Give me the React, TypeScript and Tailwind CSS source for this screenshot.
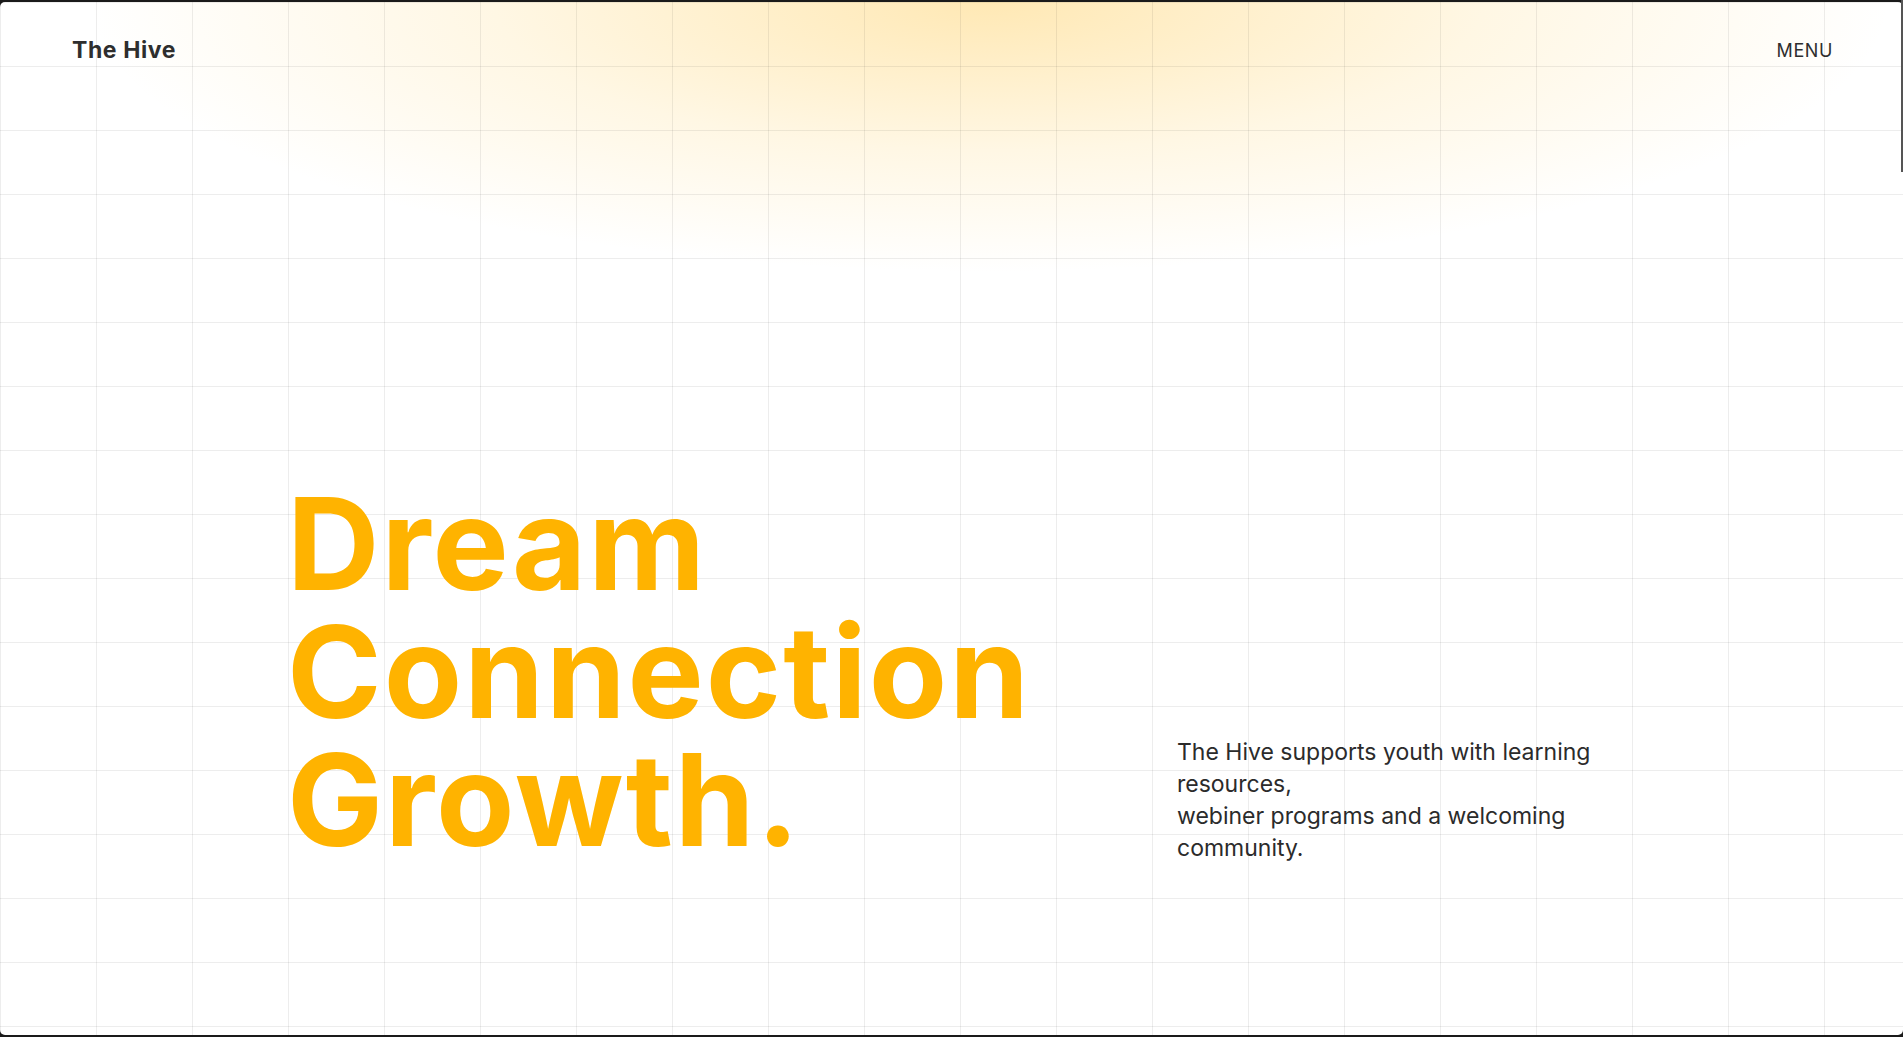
import React from "react";

const Header = () => {
  return (
    <header className="flex h-[96px] items-center justify-between pl-[72px] pr-[70px]">
      <a className="font-['Inter'] text-[23px] font-bold tracking-[0.6px] text-[#2e2e2e]">The Hive</a>
      <button className="font-['Inter'] text-[18px] font-normal tracking-[0.6px] text-[#2e2e2e]">MENU</button>
    </header>
  );
};

const Hero = () => {
  return (
    <section className="mt-[382px] flex items-end pl-[287px]">
      <h1 className="w-[890px] font-['Inter'] text-[128px] font-bold leading-none tracking-[2px] text-[#ffb300]">
        Dream
        <br />
        Connection
        <br />
        Growth.
      </h1>
      <p className="max-w-[470px] font-['Inter'] text-[23px] leading-[32px] text-[#2b2b2b]">
        The Hive supports youth with learning resources,
        <br />
        webiner programs and a welcoming community.
      </p>
    </section>
  );
};

export default function App() {
  return (
    <div className="relative h-screen w-full bg-[#1a1a1a] py-[2px]">
      <div className="h-full overflow-hidden rounded-[5px] bg-white bg-[radial-gradient(ellipse_900px_270px_at_52%_0%,rgba(255,205,90,0.45),rgba(255,215,120,0.2)_55%,transparent_100%)]">
        <div className="h-full bg-[linear-gradient(to_right,rgba(0,0,0,0.07)_1px,transparent_1px),linear-gradient(to_bottom,rgba(0,0,0,0.07)_1px,transparent_1px)] bg-[size:96px_64px]">
          <Header />
          <Hero />
        </div>
      </div>
      <div className="absolute right-0 top-0 h-[172px] w-[2px] bg-[#555]" />
    </div>
  );
}
